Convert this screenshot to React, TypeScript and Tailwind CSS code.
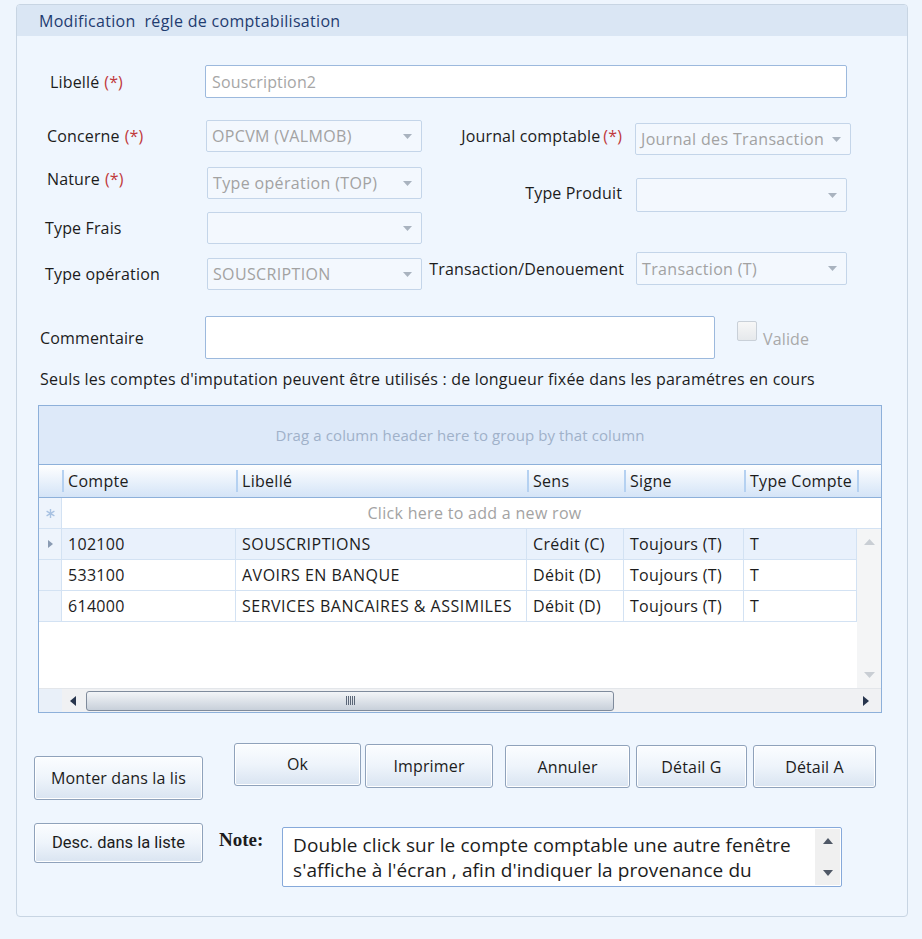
import type { ReactNode } from "react";

type Row = {
  compte: string;
  libelle: string;
  sens: string;
  signe: string;
  type: string;
};

const rows: Row[] = [
  { compte: "102100", libelle: "SOUSCRIPTIONS", sens: "Crédit (C)", signe: "Toujours (T)", type: "T" },
  { compte: "533100", libelle: "AVOIRS EN BANQUE", sens: "Débit (D)", signe: "Toujours (T)", type: "T" },
  { compte: "614000", libelle: "SERVICES BANCAIRES & ASSIMILES", sens: "Débit (D)", signe: "Toujours (T)", type: "T" },
];

function Req() {
  return <span className="ml-[5px] text-[#c0393b]">(*)</span>;
}

function DropArrow() {
  return (
    <svg width="9" height="5" viewBox="0 0 9 5" className="shrink-0">
      <path d="M0 0 H9 L4.5 5 Z" fill="#a9b3bf" />
    </svg>
  );
}

function Select({
  value,
  className,
}: {
  value?: string;
  className: string;
}) {
  return (
    <div
      className={
        "flex items-center justify-between rounded-[2px] border border-[#c4d5e9] bg-[#f3f8fe] pl-[5px] pr-[9px] tracking-[0.35px] text-[#a2a2a2] " +
        className
      }
    >
      <span className="whitespace-nowrap">{value}</span>
      <DropArrow />
    </div>
  );
}

function Button({
  children,
  className,
}: {
  children: ReactNode;
  className: string;
}) {
  return (
    <button
      type="button"
      className={
        "flex items-center justify-center rounded-[3px] border border-[#8fa2bb] bg-gradient-to-b from-[#fbfdff] via-[#eef4fb] to-[#d9e4f1] text-[#1c1c1c] shadow-[inset_0_0_0_1px_#ffffff] " +
        className
      }
    >
      {children}
    </button>
  );
}

function HeaderCell({
  label,
  className,
}: {
  label: string;
  className: string;
}) {
  return (
    <div className={"flex h-full items-center " + className}>
      <span className="h-[22px] w-[2px] shrink-0 bg-[#b5d1f1]" />
      <span className="pl-[4px]">{label}</span>
    </div>
  );
}

function Cell({
  children,
  className,
}: {
  children: ReactNode;
  className: string;
}) {
  return (
    <div
      className={
        "flex h-full items-center border-r border-[#d3e2f3] pl-[6px] whitespace-nowrap " +
        className
      }
    >
      {children}
    </div>
  );
}

function DataGrid() {
  return (
    <div className="ml-[21px] mt-[16px] flex h-[308px] w-[844px] flex-col border border-[#8db0da] bg-white tracking-[0.3px]">
      <div className="flex h-[59px] items-center justify-center border-b border-[#8db0da] bg-[#dde9f9] text-[15px] tracking-[0.1px] text-[#a0b1c9]">
        Drag a column header here to group by that column
      </div>

      <div className="flex h-[33px] border-b border-[#8db0da] bg-gradient-to-b from-[#ffffff] to-[#d4e4f7]">
        <div className="w-[23px]" />
        <HeaderCell label="Compte" className="w-[174px]" />
        <HeaderCell label="Libellé" className="w-[291px]" />
        <HeaderCell label="Sens" className="w-[97px]" />
        <HeaderCell label="Signe" className="w-[120px]" />
        <HeaderCell label="Type Compte" className="w-[113px]" />
        <div className="flex h-full items-center">
          <span className="h-[22px] w-[2px] bg-[#b5d1f1]" />
        </div>
      </div>

      <div className="flex h-[31px] border-b border-[#d3e2f3]">
        <div className="flex w-[23px] items-center justify-center border-r border-[#d3e2f3] bg-[#eef4fc]">
          <svg width="9" height="9" viewBox="0 0 9 9">
            <path
              d="M4.5 0 V9 M0.6 2.2 L8.4 6.8 M0.6 6.8 L8.4 2.2"
              stroke="#a9c2e2"
              strokeWidth="1.4"
            />
          </svg>
        </div>
        <div className="flex flex-1 items-center justify-center pl-[6px] text-[#a3a3a3]">
          Click here to add a new row
        </div>
      </div>

      <div className="flex h-[159px]">
        <div className="flex w-[818px] flex-col">
          {rows.map((row, index) => (
            <div
              key={row.compte}
              className={
                "flex h-[31px] border-b border-[#d3e2f3] " +
                (index === 0 ? "bg-[#e9f1fc]" : "bg-white")
              }
            >
              <div className="flex w-[23px] items-center justify-center border-r border-[#d3e2f3] bg-[#eef4fc]">
                {index === 0 && (
                  <svg width="5" height="8" viewBox="0 0 5 8">
                    <path d="M0 0 L5 4 L0 8 Z" fill="#8a9bb3" />
                  </svg>
                )}
              </div>
              <Cell className="w-[174px]">{row.compte}</Cell>
              <Cell className="w-[291px] tracking-[0.5px]">{row.libelle}</Cell>
              <Cell className="w-[97px]">{row.sens}</Cell>
              <Cell className="w-[120px]">{row.signe}</Cell>
              <Cell className="w-[113px]">{row.type}</Cell>
            </div>
          ))}
        </div>
        <div className="flex w-[24px] flex-col items-center justify-between bg-[#f4f5f6] py-[10px]">
          <svg width="11" height="6" viewBox="0 0 11 6">
            <path d="M0 6 L5.5 0 L11 6 Z" fill="#c9ced4" />
          </svg>
          <svg width="11" height="6" viewBox="0 0 11 6">
            <path d="M0 0 L11 0 L5.5 6 Z" fill="#c9ced4" />
          </svg>
        </div>
      </div>

      <div className="flex h-[24px] border-t border-[#e3e6ea] bg-[#f0f1f3]">
        <div className="w-[23px] bg-[#e9f0f9]" />
        <div className="flex w-[818px] items-center">
          <svg width="6" height="10" viewBox="0 0 6 10" className="ml-[8px]">
            <path d="M6 0 V10 L0 5 Z" fill="#27354d" />
          </svg>
          <div className="ml-[10px] flex h-[20px] w-[528px] items-center justify-center rounded-[3px] border border-[#7f8b9c] bg-gradient-to-b from-[#f3f5f8] to-[#c8d0da]">
            <div className="flex h-[9px] gap-[1px]">
              {[0, 1, 2, 3, 4].map((i) => (
                <span key={i} className="h-full w-[1px] bg-[#5b6677]" />
              ))}
            </div>
          </div>
          <svg width="6" height="10" viewBox="0 0 6 10" className="ml-auto mr-[11px]">
            <path d="M0 0 V10 L6 5 Z" fill="#27354d" />
          </svg>
        </div>
        <div className="flex-1 bg-[#f0f1f3]" />
      </div>
    </div>
  );
}

export default function App() {
  return (
    <div className="min-h-[939px] w-[922px] bg-[#eef5fd] pl-4 pt-1 font-['Open_Sans',sans-serif] text-[16px] leading-[20px] tracking-[0.15px] text-[#1c1c1c]">
      <div className="h-[913px] w-[892px] overflow-hidden rounded-[4px] border border-[#c8d5e3] bg-[#eff6fe]">
        <div className="flex h-[31px] items-center bg-[#dae6f4] pl-[22px] text-[16px] tracking-[0.3px] whitespace-pre text-[#1f3c70]">
          Modification  régle de comptabilisation
        </div>

        {/* Libellé */}
        <div className="mt-[29px] flex h-[33px] items-center">
          <div className="ml-[33px] w-[155px]">
            Libellé
            <Req />
          </div>
          <div className="flex h-[33px] w-[642px] items-center rounded-[2px] border border-[#9cb9dd] bg-white pl-[6px] text-[#a6a6a6]">
            Souscription2
          </div>
        </div>

        <div className="mt-[22px] flex">
          <div className="ml-[28px] flex w-[377px] flex-col">
            <div className="flex items-center">
              <div className="w-[161px] pl-[2px]">
                Concerne
                <Req />
              </div>
              <Select value="OPCVM (VALMOB)" className="h-[32px] w-[216px]" />
            </div>
            <div className="mt-[15px] flex items-center">
              <div className="mb-[8px] w-[162px] pl-[2px]">
                Nature
                <Req />
              </div>
              <Select value="Type opération (TOP)" className="h-[32px] w-[215px]" />
            </div>
            <div className="mt-[13px] flex items-center">
              <div className="w-[162px]">Type Frais</div>
              <Select className="h-[32px] w-[215px]" />
            </div>
            <div className="mt-[14px] flex items-center">
              <div className="w-[162px]">Type opération</div>
              <Select value="SOUSCRIPTION" className="h-[32px] w-[215px]" />
            </div>
          </div>

          <div className="ml-[6px] mt-[3px] flex flex-col">
            <div className="flex items-center">
              <div className="mb-[6px] w-[194px] whitespace-nowrap text-right">
                Journal comptable
                <span className="ml-[3px] text-[#c0393b]">(*)</span>
              </div>
              <Select value="Journal des Transaction" className="ml-[13px] h-[32px] w-[216px]" />
            </div>
            <div className="mt-[23px] flex items-center">
              <div className="mb-[4px] w-[194px] text-right">Type Produit</div>
              <Select className="ml-[14px] h-[34px] w-[211px]" />
            </div>
            <div className="mt-[40px] flex items-center">
              <div className="w-[196px] whitespace-nowrap text-right">
                Transaction/Denouement
              </div>
              <Select value="Transaction (T)" className="ml-[12px] h-[33px] w-[211px]" />
            </div>
          </div>
        </div>

        {/* Commentaire */}
        <div className="mt-[26px] flex items-center">
          <div className="ml-[23px] w-[165px]">Commentaire</div>
          <div className="h-[43px] w-[510px] rounded-[2px] border border-[#9cb9dd] bg-white" />
          <div className="ml-[22px] mb-[13px] h-[20px] w-[20px] rounded-[2px] border border-[#c9d0d8] bg-gradient-to-b from-[#f7f7f7] to-[#e6e9ec]" />
          <div className="ml-[6px] mt-[2px] text-[#a9a9a9]">Valide</div>
        </div>

        <div className="ml-[23px] mt-[10px] tracking-[0.2px]">
          Seuls les comptes d'imputation peuvent être utilisés : de longueur
          fixée dans les paramétres en cours
        </div>

        <DataGrid />

        {/* Buttons */}
        <div className="mt-[30px] flex items-start">
          <Button className="ml-[17px] mt-[13px] h-[44px] w-[169px]">
            Monter dans la lis
          </Button>
          <Button className="ml-[31px] h-[43px] w-[127px] pb-[2px]">Ok</Button>
          <Button className="ml-[4px] mt-[1px] h-[44px] w-[128px]">Imprimer</Button>
          <Button className="ml-[12px] mt-[2px] h-[43px] w-[125px]">Annuler</Button>
          <Button className="ml-[6px] mt-[2px] h-[43px] w-[111px]">Détail G</Button>
          <Button className="ml-[6px] mt-[2px] h-[43px] w-[123px]">Détail A</Button>
        </div>

        <div className="mt-[23px] flex items-start">
          <Button className="ml-[17px] h-[40px] w-[169px] font-['Liberation_Sans_Narrow','Roboto',sans-serif] text-[16.5px] tracking-normal">
            Desc. dans la liste
          </Button>
          <div className="ml-[16px] mt-[7px] w-[63px] font-['Liberation_Serif',serif] text-[19px] font-bold tracking-normal">
            Note:
          </div>
          <div className="mt-[4px] flex h-[60px] w-[560px] rounded-[2px] border border-[#86a9da] bg-white">
            <div className="flex-1 pl-[10px] pt-[5px] text-[19px] leading-[25px] tracking-[0.1px]">
              Double click sur le compte comptable une autre fenêtre
              <br />
              s'affiche à l'écran , afin d'indiquer la provenance du
            </div>
            <div className="my-[1px] mr-[1px] flex w-[25px] flex-col items-center justify-between bg-[#f0f0f0] py-[9px]">
              <svg width="10" height="6" viewBox="0 0 10 6">
                <path d="M0 6 L5 0 L10 6 Z" fill="#4f5866" />
              </svg>
              <svg width="10" height="6" viewBox="0 0 10 6">
                <path d="M0 0 L10 0 L5 6 Z" fill="#4f5866" />
              </svg>
            </div>
          </div>
        </div>
      </div>
    </div>
  );
}
